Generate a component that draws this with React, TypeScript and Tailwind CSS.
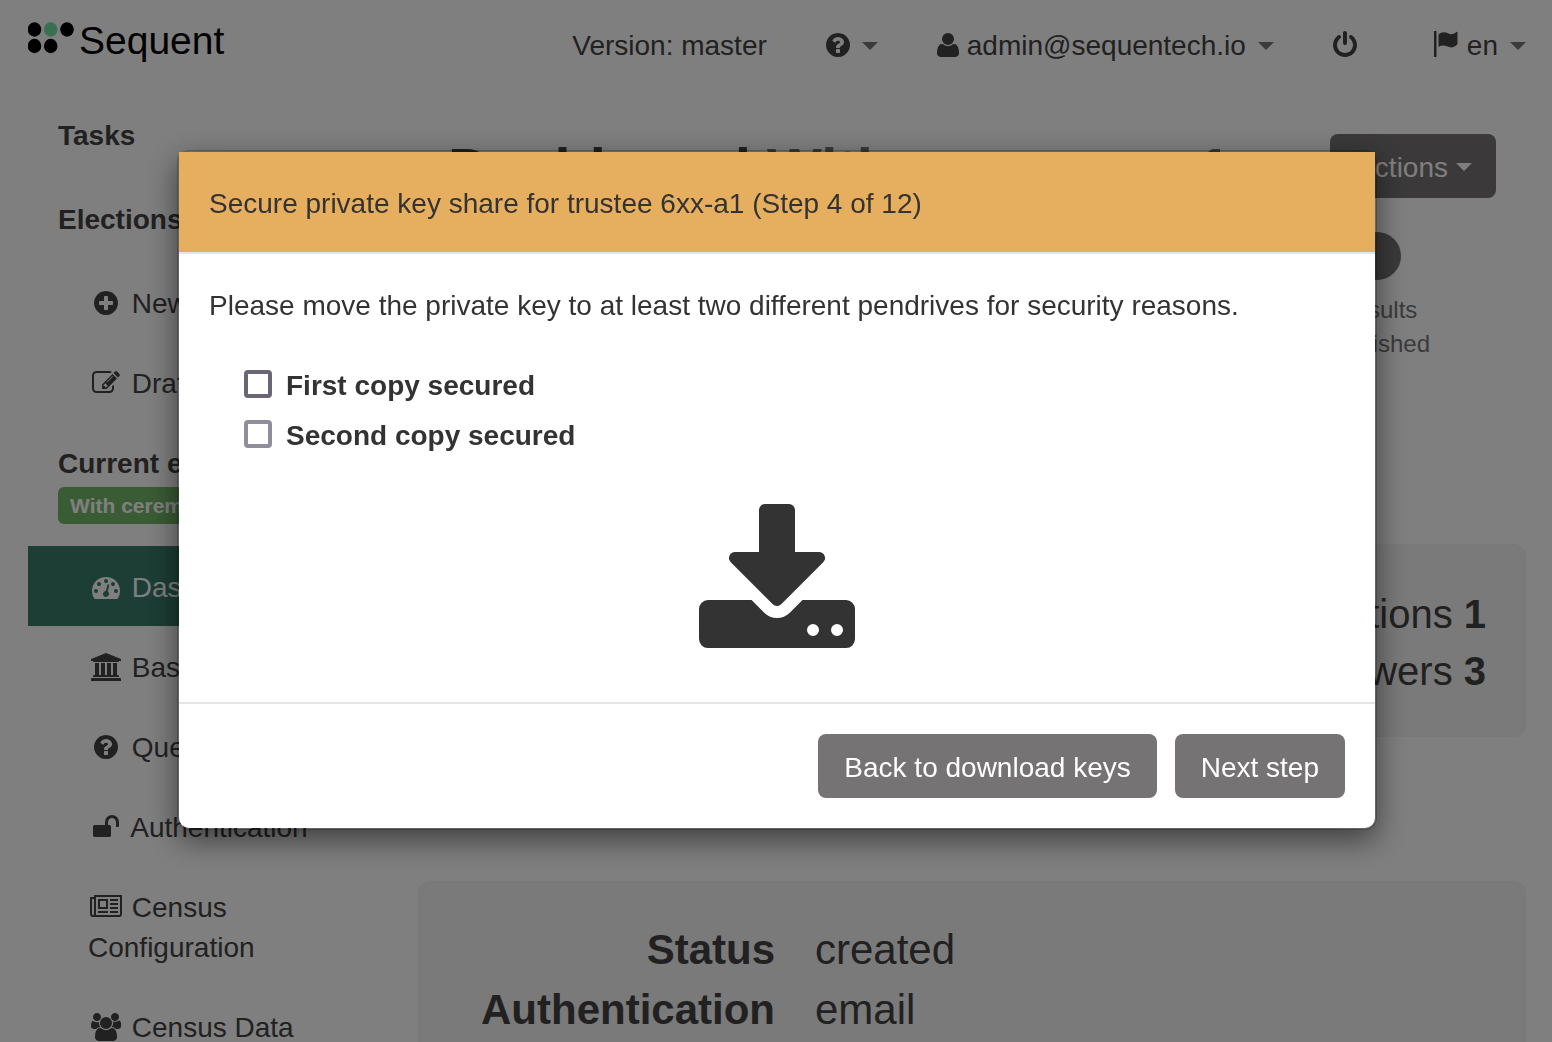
import React, { useState } from "react";

type IconDef = { d: string; box: string; w: string };

const CIRCLE =
  "M1664 896q0 209-103 385.5t-279.5 279.5-385.5 103-385.5-103-279.5-279.5-103-385.5 103-385.5 279.5-279.5 385.5-103 385.5 103 279.5 279.5 103 385.5z";

const ICONS = {
  question: {
    box: "128 0 1536 1792",
    w: "w-6",
    d:
      "M1024 1376v-192q0-14-9-23t-23-9h-192q-14 0-23 9t-9 23v192q0 14 9 23t23 9h192q14 0 23-9t9-23zm256-672q0-88-55.5-163t-138.5-116-170-41q-243 0-371 213-15 24 8 42l132 100q7 6 19 6 16 0 25-12 53-68 86-92 34-24 86-24 48 0 85.5 26t37.5 59q0 38-20 61t-68 45q-63 28-115.5 86.5t-52.5 125.5v36q0 14 9 23t23 9h192q14 0 23-9t9-23q0-19 21.5-49.5t54.5-49.5q32-18 49-28.5t46-35 44.5-48 28-60.5 12.5-81z" +
      CIRCLE,
  },
  plus: {
    box: "128 0 1536 1792",
    w: "w-6",
    d:
      "M1344 960v-128q0-26-19-45t-45-19h-256v-256q0-26-19-45t-45-19h-128q-26 0-45 19t-19 45v256h-256q-26 0-45 19t-19 45v128q0 26 19 45t45 19h256v256q0 26 19 45t45 19h128q26 0 45-19t19-45v-256h256q26 0 45-19t19-45z" +
      CIRCLE,
  },
  user: {
    box: "192 0 1408 1792",
    w: "w-[22px]",
    d: "M1600 1405q0 120-73 189.5t-194 69.5h-874q-121 0-194-69.5t-73-189.5q0-53 3.5-103.5t14-109 26.5-108.5 43-97.5 62-81 85.5-53.5 111.5-20q9 0 42 21.5t74.5 48 108 48 133.5 21.5 133.5-21.5 108-48 74.5-48 42-21.5q61 0 111.5 20t85.5 53.5 62 81 43 97.5 26.5 108.5 14 109 3.5 103.5zm-320-893q0 159-112.5 271.5t-271.5 112.5-271.5-112.5-112.5-271.5 112.5-271.5 271.5-112.5 271.5 112.5 112.5 271.5z",
  },
  power: {
    box: "128 0 1536 1792",
    w: "w-6",
    d: "M1664 896q0 156-61 298t-164 245-245 164-298 61-298-61-245-164-164-245-61-298q0-182 80.5-343t226.5-270q43-32 95.5-25t83.5 50q32 42 24.5 94.5t-49.5 84.5q-98 74-151.5 181t-53.5 228q0 104 40.5 198.5t109.5 163.5 163.5 109.5 198.5 40.5 198.5-40.5 163.5-109.5 109.5-163.5 40.5-198.5q0-121-53.5-228t-151.5-181q-42-32-49.5-84.5t24.5-94.5q31-43 84-50t95 25q146 109 226.5 270t80.5 343zm-640-768v640q0 52-38 90t-90 38-90-38-38-90v-640q0-52 38-90t90-38 90 38 38 90z",
  },
  edit: {
    box: "0 0 1792 1792",
    w: "w-7",
    d: "M888 1184l116-116-152-152-116 116v56h96v96h56zm440-720q-16-16-33 1l-350 350q-17 17-1 33t33-1l350-350q17-17 1-33zm80 594v190q0 119-84.5 203.5t-203.5 84.5h-832q-119 0-203.5-84.5t-84.5-203.5v-832q0-119 84.5-203.5t203.5-84.5h832q63 0 117 25 15 7 18 23 3 17-9 29l-49 49q-14 14-32 8-23-6-45-6h-832q-66 0-113 47t-47 113v832q0 66 47 113t113 47h832q66 0 113-47t47-113v-126q0-13 9-22l64-64q15-15 35-7t20 29zm-96-738l288 288-672 672h-288v-288zm444 132l-92 92-288-288 92-92q28-28 68-28t68 28l152 152q28 28 28 68t-28 68z",
  },
  gauge: {
    box: "0 0 1792 1792",
    w: "w-7",
    d: "M384 1152q0-53-37.5-90.5t-90.5-37.5-90.5 37.5-37.5 90.5 37.5 90.5 90.5 37.5 90.5-37.5 37.5-90.5zm192-448q0-53-37.5-90.5t-90.5-37.5-90.5 37.5-37.5 90.5 37.5 90.5 90.5 37.5 90.5-37.5 37.5-90.5zm428 481l101-382q6-26-7.5-48.5t-38.5-29.5-48 6.5-30 39.5l-101 382q-60 5-107 43.5t-63 98.5q-20 77 20 146t117 89 146-20 89-117q16-60-6-117t-72-91zm660-33q0-53-37.5-90.5t-90.5-37.5-90.5 37.5-37.5 90.5 37.5 90.5 90.5 37.5 90.5-37.5 37.5-90.5zm-640-640q0-53-37.5-90.5t-90.5-37.5-90.5 37.5-37.5 90.5 37.5 90.5 90.5 37.5 90.5-37.5 37.5-90.5zm448 192q0-53-37.5-90.5t-90.5-37.5-90.5 37.5-37.5 90.5 37.5 90.5 90.5 37.5 90.5-37.5 37.5-90.5zm320 448q0 261-141 483-19 29-54 29h-1402q-35 0-54-29-141-221-141-483 0-182 71-348t191-286 286-191 348-71 348 71 286 191 191 286 71 348z",
  },
  bank: {
    box: "0 0 1920 1792",
    w: "w-[30px]",
    d: "M960 0l960 384v128h-128q0 26-20.5 45t-48.5 19h-1526q-28 0-48.5-19t-20.5-45h-128v-128zm-704 640h256v768h128v-768h256v768h128v-768h256v768h128v-768h256v768h59q28 0 48.5 19t20.5 45v64h-1664v-64q0-26 20.5-45t48.5-19h59v-768zm1595 960q28 0 48.5 19t20.5 45v128h-1920v-128q0-26 20.5-45t48.5-19h1782z",
  },
  unlock: {
    box: "64 0 1664 1792",
    w: "w-[26px]",
    d: "M1728 576v256q0 26-19 45t-45 19h-64q-26 0-45-19t-19-45v-256q0-106-75-181t-181-75-181 75-75 181v192h96q40 0 68 28t28 68v576q0 40-28 68t-68 28h-960q-40 0-68-28t-28-68v-576q0-40 28-68t68-28h672v-192q0-185 131.5-316.5t316.5-131.5 316.5 131.5 131.5 316.5z",
  },
  news: {
    box: "0 0 2048 1792",
    w: "w-8",
    d: "M1024 512h-384v384h384v-384zm128 640v128h-640v-128h640zm0-768v640h-640v-640h640zm640 768v128h-512v-128h512zm0-256v128h-512v-128h512zm0-256v128h-512v-128h512zm0-256v128h-512v-128h512zm-1536 960v-960h-128v960q0 26 19 45t45 19 45-19 19-45zm1664 0v-1088h-1536v1088q0 33-11 64h1483q26 0 45-19t19-45zm128-1216v1216q0 80-56 136t-136 56h-1664q-80 0-136-56t-56-136v-1088h256v-128h1792z",
  },
  users: {
    box: "0 0 1920 1792",
    w: "w-[30px]",
    d: "M593 896q-162 5-265 128h-134q-82 0-138-40.5t-56-118.5q0-353 124-353 6 0 43.5 21t97.5 42.5 119 21.5q67 0 133-23-5 37-5 66 0 159 93 293zm1071 637q0 120-73 189.5t-194 69.5h-874q-121 0-194-69.5t-73-189.5q0-53 3.5-103.5t14-109 26.5-108.5 43-97.5 62-81 85.5-53.5 111.5-20q10 0 43 21.5t73 48 107 48 135 21.5 135-21.5 107-48 73-48 43-21.5q61 0 111.5 20t85.5 53.5 62 81 43 97.5 26.5 108.5 14 109 3.5 103.5zm-1024-1277q0 106-75 181t-181 75-181-75-75-181 75-181 181-75 181 75 75 181zm704 384q0 159-112.5 271.5t-271.5 112.5-271.5-112.5-112.5-271.5 112.5-271.5 271.5-112.5 271.5 112.5 112.5 271.5zm576 225q0 78-56 118.5t-138 40.5h-134q-103-123-265-128 93-134 93-293 0-29-5-66 66 23 133 23 59 0 119-21.5t97.5-42.5 43.5-21q124 0 124 353zm-128-609q0 106-75 181t-181 75-181-75-75-181 75-181 181-75 181 75 75 181z",
  },
} satisfies Record<string, IconDef>;

type IconName = keyof typeof ICONS;

function Icon({ name }: { name: IconName }) {
  const icon = ICONS[name];
  return (
    <svg viewBox={icon.box} className={`inline-block h-7 shrink-0 align-[-4px] ${icon.w}`} fill="currentColor" fillRule="evenodd" aria-hidden="true">
      <path d={icon.d} />
    </svg>
  );
}

function Flag() {
  return (
    <svg viewBox="0 0 26 28" className="h-7 w-[26px] shrink-0" fill="currentColor" aria-hidden="true">
      <path d="M1 0h2.500v26H1z" />
      <path d="M5.500 3.500C8 1 12 .5 15 2.200c3 1.600 6 1.200 8.300-1.200.6-.5 1.200-.3 1.200.5v11.500c-2.500 3.500-6.500 4.200-10 2.600-3-1.400-6-1.500-9 .4z" />
    </svg>
  );
}

function Caret({ className = "" }: { className?: string }) {
  return (
    <svg viewBox="0 0 16 8" className={`mt-0.5 h-2 w-4 shrink-0 ${className}`} fill="currentColor" aria-hidden="true">
      <path d="M0 0h16L8 8z" />
    </svg>
  );
}

function Logo() {
  return (
    <a href="#home" aria-label="Sequent" className="flex items-center gap-[5px] text-black">
      <svg viewBox="0 0 46 42" className="h-[42px] w-[46px]" aria-hidden="true">
        <ellipse cx="6.500" cy="9.500" rx="6.800" ry="7.200" />
        <ellipse cx="22.700" cy="9.500" rx="6.800" ry="7.200" fill="#74e0a4" />
        <ellipse cx="39" cy="9.500" rx="6.800" ry="7.200" />
        <ellipse cx="6.500" cy="26" rx="6.800" ry="7.200" />
        <ellipse cx="22.700" cy="26" rx="6.800" ry="7.200" />
      </svg>
      <span className="text-[39px] leading-[42px]">Sequent</span>
    </a>
  );
}

function SideLink({ icon, label, active = false }: { icon: IconName; label: string; active?: boolean }) {
  return (
    <li>
      <a href="#section" className={`block pt-[22px] pr-[30px] pb-[18px] pl-[60px] ${active ? "bg-[#387c68] text-white" : ""}`}>
        <span className="inline-block w-9 text-center">
          <Icon name={icon} />
        </span>{" "}
        {label}
      </a>
    </li>
  );
}

const ELECTION = "With ceremony 1";

function Sidebar() {
  return (
    <nav aria-label="Administration" className="w-[360px] shrink-0 pt-[26px]">
      <a href="#tasks" className="block px-[30px] font-bold">Tasks</a>
      <h2 className="mt-11 px-[30px] font-bold">Elections</h2>
      <ul className="mt-[22px]">
        <SideLink icon="plus" label="New election" />
        <SideLink icon="edit" label="Drafts" />
      </ul>
      <div className="mt-[22px] px-[30px]">
        <h2 className="font-bold">Current election</h2>
        <span className="mt-[3px] block w-fit rounded-md bg-[#74b868] px-3 text-[21px] leading-[37px] font-bold whitespace-nowrap text-white">{ELECTION}</span>
      </div>
      <ul className="mt-[22px]">
        <SideLink icon="gauge" label="Dashboard" active />
        <SideLink icon="bank" label="Basic details" />
        <SideLink icon="question" label="Questions" />
        <SideLink icon="unlock" label="Authentication" />
        <SideLink icon="news" label="Census Configuration" />
        <SideLink icon="users" label="Census Data" />
      </ul>
    </nav>
  );
}

function TopBar() {
  return (
    <header className="flex items-start justify-between pt-5 pr-[26px] pl-7">
      <Logo />
      <div className="flex h-[45px] items-center pt-[5px]">
        <span className="pt-0.5">Version: master</span>
        <button type="button" aria-label="Help" className="ml-[59px] flex items-center gap-3">
          <Icon name="question" />
          <Caret className="text-[#777]" />
        </button>
        <button type="button" className="ml-[59px] flex items-center gap-2">
          <Icon name="user" />
          <span className="pt-0.5">admin@sequentech.io</span>
          <Caret className="ml-1 text-[#777]" />
        </button>
        <button type="button" aria-label="Log out" className="ml-[59px] flex">
          <Icon name="power" />
        </button>
        <button type="button" className="ml-[76px] flex items-center gap-2">
          <Flag />
          <span className="pt-0.5">en</span>
          <Caret className="ml-1 text-[#777]" />
        </button>
      </div>
    </header>
  );
}

function Main() {
  return (
    <main className="ml-[30px] min-w-0 flex-1 pt-11">
      <div className="flex items-start justify-between px-[30px]">
        <h1 className="pt-1.5 text-[58px] leading-[58px] font-bold whitespace-nowrap">
          Dashboard <span className="text-[#777]">{ELECTION}</span>
        </h1>
        <button type="button" className="flex h-16 items-center gap-2 rounded-lg bg-[#767374] pr-6 pl-[26px] text-white">
          <span className="pt-[3px]">Actions</span>
          <Caret />
        </button>
      </div>
      <div className="mt-[34px] flex justify-end pr-24 text-2xl leading-[34px] text-[#777]">
        <div className="flex flex-col items-center">
          <span className="mb-[13px] size-12 rounded-full bg-[#767374]" />
          <span>Results</span>
          <span>Published</span>
        </div>
      </div>
      <section className="mt-[183px] rounded-xl border-2 border-[#f3f3f3] bg-[#f5f5f5] px-[38px] pt-10 pb-[35px] text-right text-[40px] leading-[57px]">
        <p>Questions <b>1</b></p>
        <p>Answers <b>3</b></p>
      </section>
      <section className="mt-36 rounded-xl border-2 border-[#f3f3f3] bg-[#f5f5f5] px-9 pt-[37px] pb-9">
        <dl className="grid grid-cols-[319px_1fr] gap-x-10 text-[42px] leading-[60px]">
          <dt className="text-right font-bold">Status</dt>
          <dd>created</dd>
          <dt className="text-right font-bold">Authentication</dt>
          <dd>email</dd>
        </dl>
      </section>
    </main>
  );
}

function Check({ label, tone }: { label: string; tone: string }) {
  const [checked, setChecked] = useState(false);
  return (
    <label className="flex h-10 w-fit items-center gap-[14px] font-bold">
      <input
        type="checkbox"
        checked={checked}
        onChange={(e) => setChecked(e.target.checked)}
        className={`size-7 appearance-none rounded-sm border-4 bg-white checked:bg-[#6a6677] ${tone}`}
      />
      <span className="pt-[3px]">{label}</span>
    </label>
  );
}

function FooterButton({ label }: { label: string }) {
  return (
    <button type="button" className="h-16 rounded-lg bg-[#767374] px-[26px] pt-[3px] text-white">
      {label}
    </button>
  );
}

function KeyShareDialog() {
  return (
    <div className="fixed inset-0 overflow-hidden bg-black/50 pt-[150px] pl-0.5">
      <div
        role="dialog"
        aria-modal="true"
        aria-labelledby="dialog-title"
        className="mx-auto w-full max-w-[1200px] rounded-xl border-2 border-black/20 bg-white bg-clip-padding text-[#333] shadow-[0_10px_30px_rgba(0,0,0,0.5)]"
      >
        <div className="border-b-2 border-[#e5e5e5] bg-[#e6af5f] bg-clip-padding px-[30px] pt-8 pb-7">
          <h2 id="dialog-title">Secure private key share for trustee 6xx-a1 (Step 4 of 12)</h2>
        </div>
        <div className="px-[30px] pt-8 pb-[30px]">
          <p>Please move the private key to at least two different pendrives for security reasons.</p>
          <div className="mt-[38px] flex flex-col gap-[10px] pl-[35px]">
            <Check label="First copy secured" tone="border-[#6a6677]" />
            <Check label="Second copy secured" tone="border-[#918e9c]" />
          </div>
          <svg viewBox="64 0 1664 1792" className="mx-auto mt-[50px] h-[168px] w-[156px]" fill="currentColor" aria-hidden="true">
            <path d="M1344 1344q0-26-19-45t-45-19-45 19-19 45 19 45 45 19 45-19 19-45zm256 0q0-26-19-45t-45-19-45 19-19 45 19 45 45 19 45-19 19-45zm128-224v320q0 40-28 68t-68 28h-1472q-40 0-68-28t-28-68v-320q0-40 28-68t68-28h465l135 136q58 56 136 56t136-56l136-136h464q40 0 68 28t28 68zm-325-569q17 41-14 70l-448 448q-18 19-45 19t-45-19l-448-448q-31-29-14-70 17-39 59-39h256v-448q0-26 19-45t45-19h256q26 0 45 19t19 45v448h256q42 0 59 39z" />
          </svg>
        </div>
        <div className="flex justify-end gap-[18px] border-t-2 border-[#e5e5e5] p-[30px]">
          <FooterButton label="Back to download keys" />
          <FooterButton label="Next step" />
        </div>
      </div>
    </div>
  );
}

export default function App() {
  return (
    <div className="h-screen overflow-hidden bg-white font-['Liberation_Sans',Arial,sans-serif] text-[28px] leading-10 text-[#434343]">
      <TopBar />
      <div className="flex pt-[25px] pr-[26px] pl-7">
        <Sidebar />
        <Main />
      </div>
      <KeyShareDialog />
    </div>
  );
}
